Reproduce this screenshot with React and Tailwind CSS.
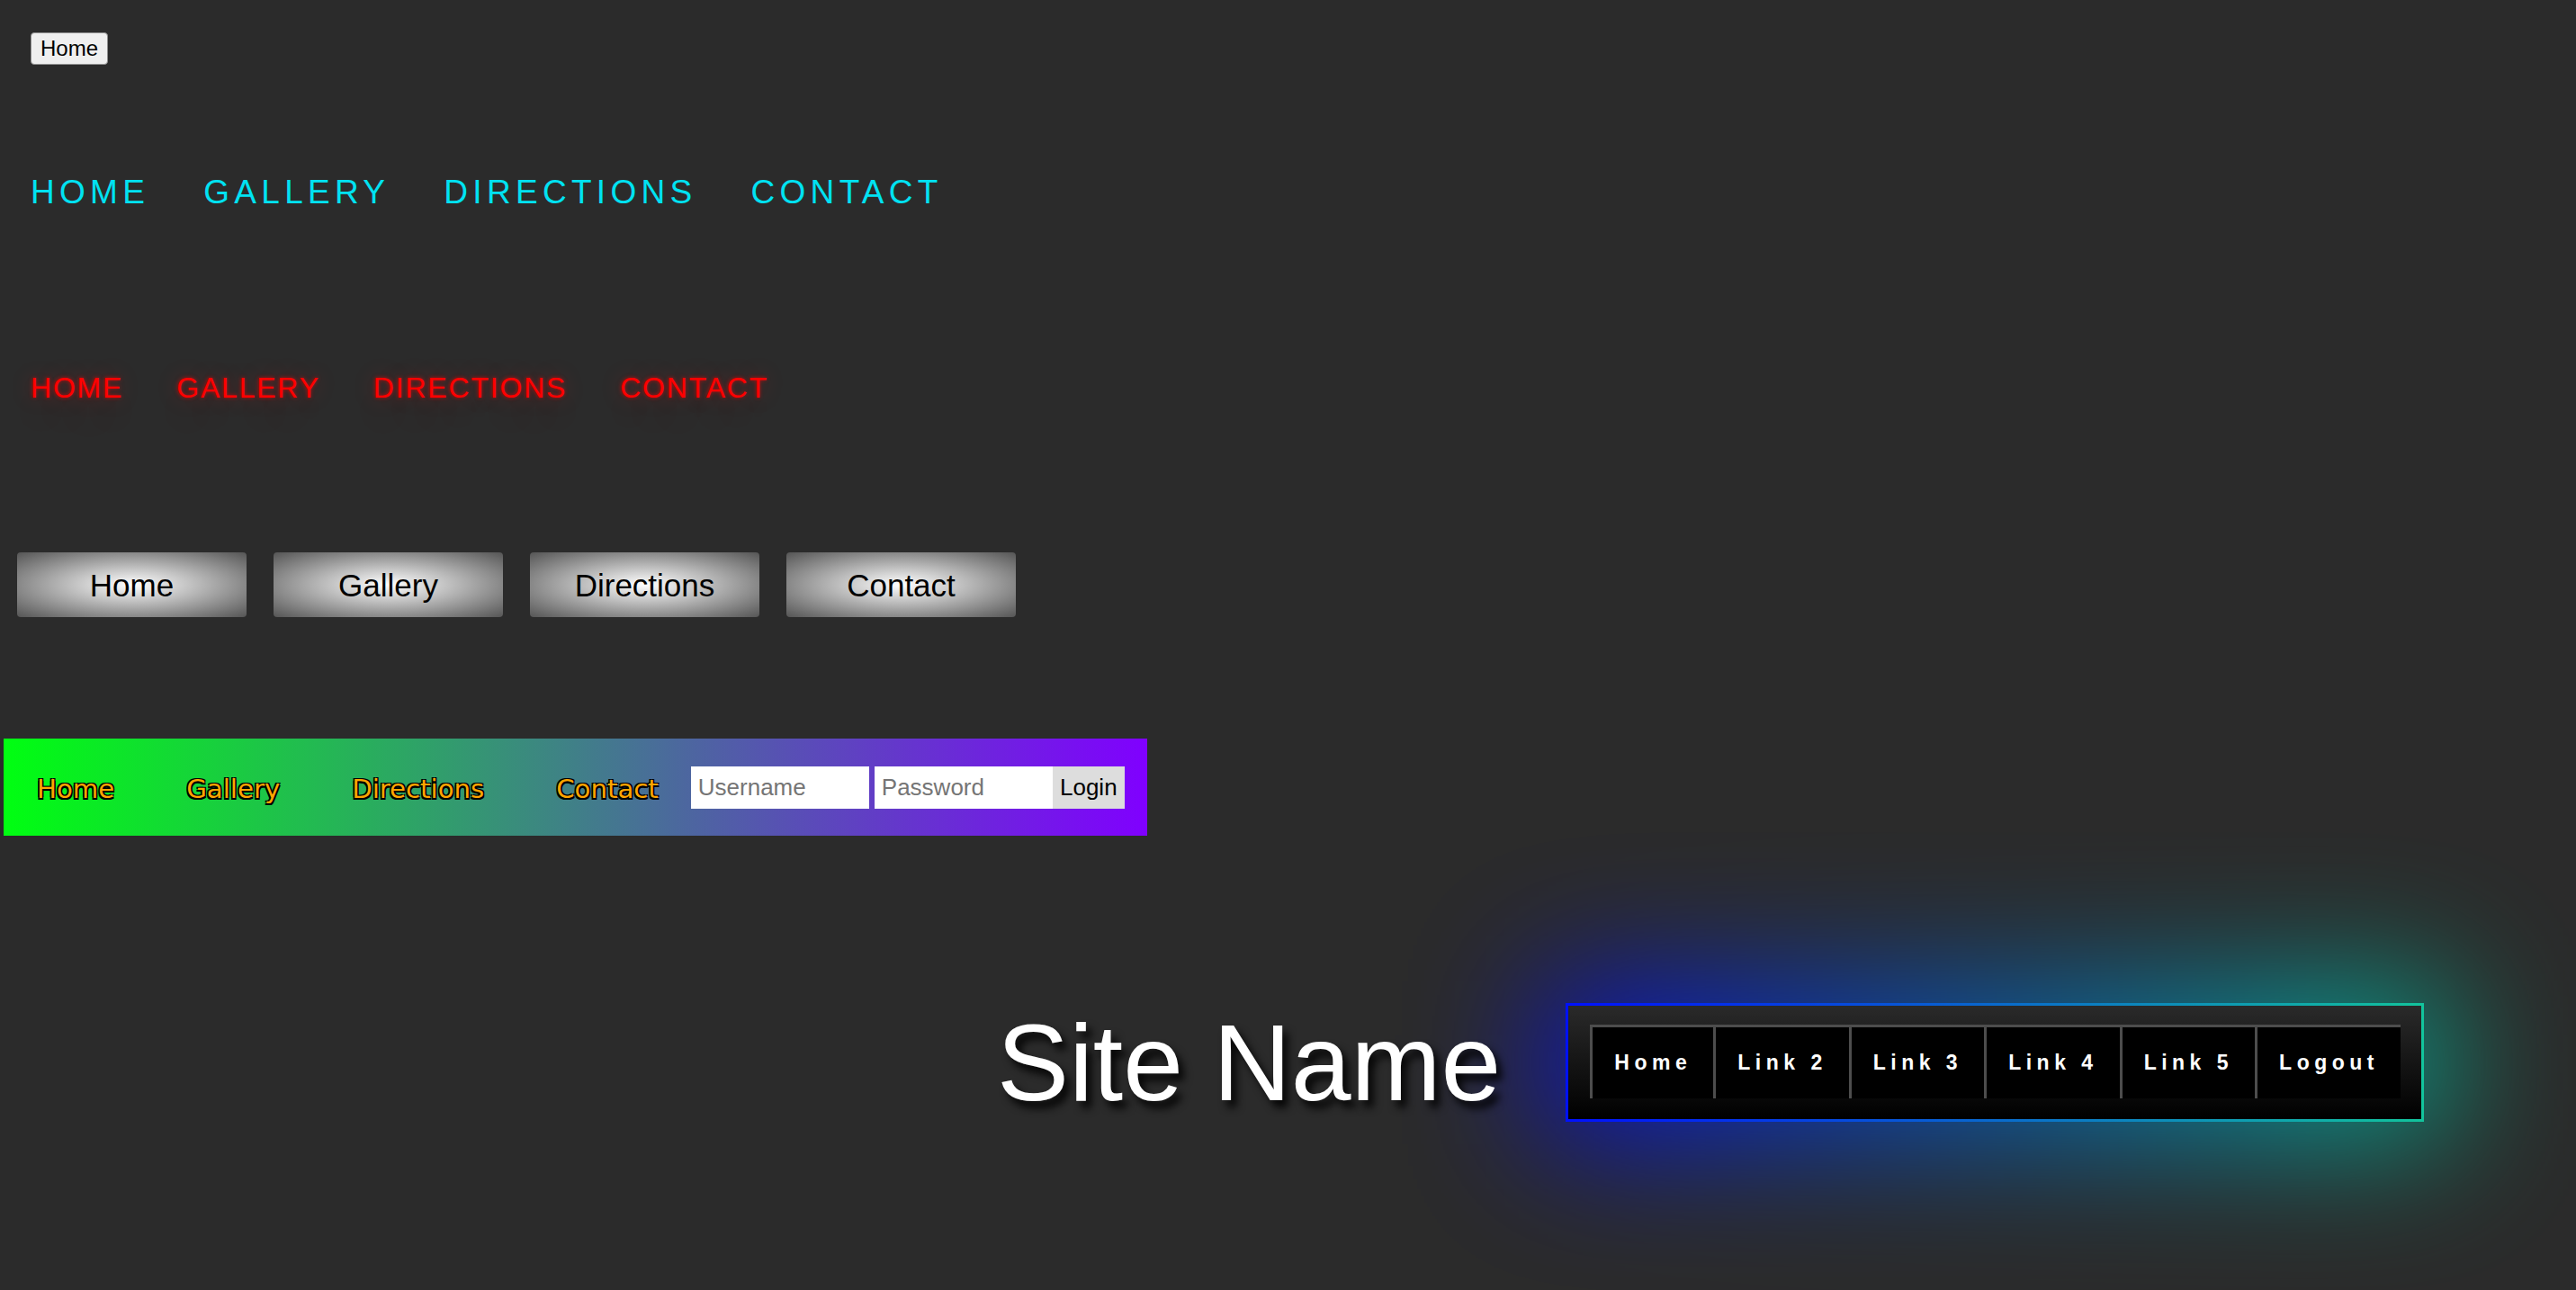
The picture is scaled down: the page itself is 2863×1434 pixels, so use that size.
const mainLinks = ["HOME", "GALLERY", "DIRECTIONS", "CONTACT"];
const pillLinks = ["Home", "Gallery", "Directions", "Contact"];
const boxLinks = ["Home", "Link 2", "Link 3", "Link 4", "Link 5", "Logout"];

function GlowNav() {
  return (
    <div className="relative isolate">
      {/* soft blue/teal halo behind the box */}
      <div className="absolute -inset-[25px] -z-10 bg-[linear-gradient(to_right,#0000ff,#00d0a0)] opacity-75 blur-[75px]" />
      <div className="bg-[linear-gradient(to_right,#0010ff,#12c49c)] p-[3px]">
        <div className="flex bg-[linear-gradient(to_bottom,#2a2a2a,#000000)] pl-[24px] pr-[23px] pt-[21px] pb-[23px]">
          {boxLinks.map((link) => (
            <a
              key={link}
              href="#"
              className="flex h-[82px] items-center border-t-[3px] border-l-[3px] border-[#4d4d4d] bg-black px-[24px] text-[23px] font-bold leading-none tracking-[5.5px] text-white"
            >
              {link}
            </a>
          ))}
        </div>
      </div>
    </div>
  );
}

export default function App() {
  return (
    <div className="min-h-screen w-full overflow-hidden bg-[#2b2b2b] pt-[36px] font-['Liberation_Sans',Arial,sans-serif]">
      <div className="flex pl-[34px]">
        <button className="h-[36px] rounded-[4px] border border-[#8f8f8f] bg-[#efefef] px-[10px] text-[24px] leading-none text-black">
          Home
        </button>
      </div>

      <nav className="mt-[123px] flex gap-[60px] pl-[34px] text-[37px] leading-none tracking-[5.3px] text-[#00e2f2]">
        {mainLinks.map((link) => (
          <a key={link} href="#">
            {link}
          </a>
        ))}
      </nav>

      <nav className="mt-[183px] flex gap-[59px] pl-[34px] text-[32px] leading-none tracking-[1.8px] text-[#ff0000] [text-shadow:0_0_4px_rgba(255,0,0,0.7),0_0_22px_rgba(255,0,0,0.35),0_25px_45px_rgba(255,0,0,0.12)]">
        {mainLinks.map((link) => (
          <a key={link} href="#">
            {link}
          </a>
        ))}
      </nav>

      <nav className="mt-[167px] flex gap-[30px] pl-[19px]">
        {pillLinks.map((link) => (
          <a
            key={link}
            href="#"
            className="flex h-[72px] w-[255px] items-center justify-center rounded-[4px] bg-[radial-gradient(#ffffff,#555555)] text-[35px] leading-none text-black"
          >
            {link}
          </a>
        ))}
      </nav>

      <div className="ml-[4px] mt-[135px] flex h-[108px] w-[1271px] items-center bg-[linear-gradient(to_right,#00ff11,#8000ff)] pl-[37px]">
        <div className="flex gap-[80px] pt-[6px] font-['DejaVu_Sans',Verdana,sans-serif] text-[29.2px] leading-none text-[#ffa500] [text-shadow:-1.5px_-1.5px_0_#000,1.5px_-1.5px_0_#000,-1.5px_1.5px_0_#000,1.5px_1.5px_0_#000,0_2px_0_#000]">
          {pillLinks.map((link) => (
            <a key={link} href="#">
              {link}
            </a>
          ))}
        </div>
        <div className="ml-[36px] flex h-[47px]">
          <input
            type="text"
            placeholder="Username"
            className="h-full w-[198px] border-0 bg-white pl-[8px] text-[26px] text-black outline-none placeholder:text-[#757575]"
          />
          <input
            type="password"
            placeholder="Password"
            className="ml-[6px] h-full w-[198px] border-0 bg-white pl-[8px] text-[26px] text-black outline-none placeholder:text-[#757575]"
          />
          <button className="h-full w-[80px] bg-[#dddddd] text-[26px] leading-none text-black">
            Login
          </button>
        </div>
      </div>

      <div className="mt-[186px] flex items-center justify-end pr-[169px]">
        <h1 className="relative z-10 mr-[72px] text-[120px] font-normal leading-none text-white [text-shadow:6px_8px_10px_rgba(0,0,0,0.9)]">
          Site Name
        </h1>
        <GlowNav />
      </div>
    </div>
  );
}
